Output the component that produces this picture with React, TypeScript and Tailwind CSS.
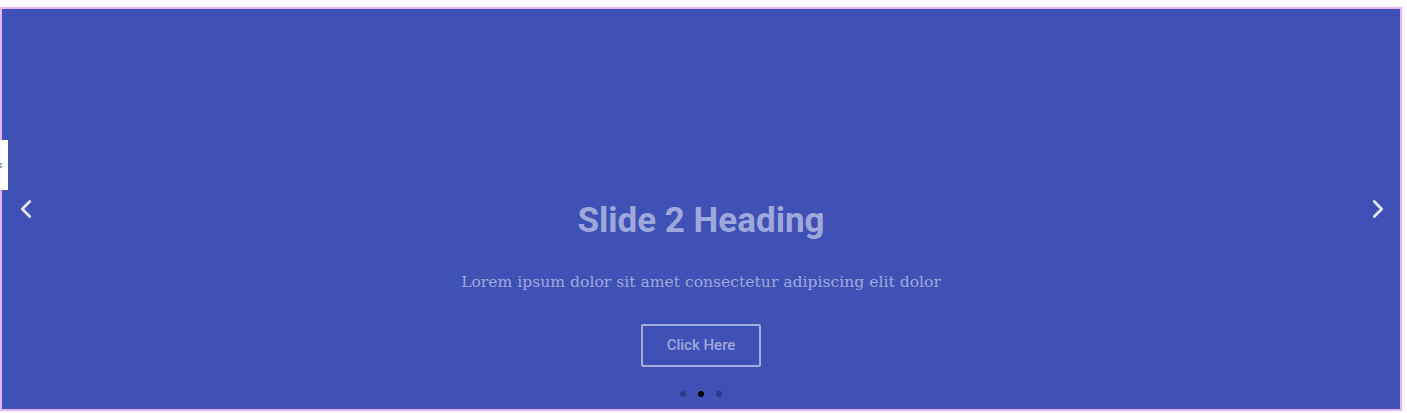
import { ChevronLeft, ChevronRight } from "lucide-react";

const slides = [1, 2, 3];

export default function App() {
  const active = 1;

  return (
    <div className="w-[1407px] h-[413px] bg-white pt-[7px] font-['Roboto',sans-serif]">
      <div className="relative w-[1402px] h-[404px] border-2 border-[#e8b4f6] bg-[#3f51b5]">
        {/* side tab peeking in from the left edge */}
        <div className="absolute -left-[2px] top-[131px] w-[8px] h-[50px] bg-white flex items-center overflow-hidden">
          <span className="text-[11px] leading-none text-gray-600 -ml-[3px]">&lt;</span>
        </div>

        <button className="absolute left-[9px] top-[185px] text-[#e3e6f6]">
          <ChevronLeft size={30} strokeWidth={2.2} />
        </button>
        <button className="absolute right-[7px] top-[185px] text-[#e3e6f6]">
          <ChevronRight size={30} strokeWidth={2.2} />
        </button>

        <div className="flex flex-col items-center pt-[191px] text-[#9fa8da]">
          <h2 className="text-[35px] leading-[42px] font-bold">Slide 2 Heading</h2>
          <p className="mt-[29px] text-[15.6px] leading-[22px] font-['DejaVu_Serif',serif]">
            Lorem ipsum dolor sit amet consectetur adipiscing elit dolor
          </p>
          <button className="mt-[31px] w-[120px] h-[43px] border-2 border-[#a4addd] rounded-[2px] text-[15px] font-medium">
            Click Here
          </button>
        </div>

        <div className="absolute left-0 right-0 top-[382px] flex justify-center gap-[12px]">
          {slides.map((s, i) => (
            <span
              key={s}
              className={
                i === active
                  ? "w-[6px] h-[6px] rounded-full bg-black"
                  : "w-[6px] h-[6px] rounded-full bg-[#2c3a8a]"
              }
            />
          ))}
        </div>
      </div>
    </div>
  );
}
